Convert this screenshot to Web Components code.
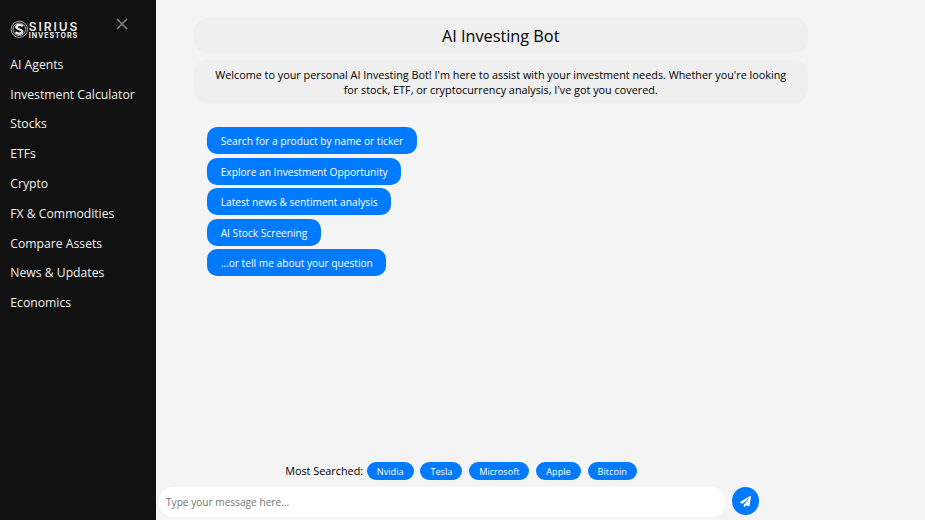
<!DOCTYPE html>
<html lang="en">
<head>
<meta charset="utf-8">
<title>AI Investing Bot</title>
<style>
    html, body {
        margin: 0;
        height: 100%;
        overflow: hidden;
    }

    body {
        background: #f4f4f4;
        color: #000;
        font-family: "Open Sans", "Noto Sans", sans-serif;
    }
</style>
</head>
<body>
<invest-app>
    <side-nav slot="nav">
        <nav-link>AI Agents</nav-link>
        <nav-link>Investment Calculator</nav-link>
        <nav-link>Stocks</nav-link>
        <nav-link>ETFs</nav-link>
        <nav-link>Crypto</nav-link>
        <nav-link>FX &amp; Commodities</nav-link>
        <nav-link>Compare Assets</nav-link>
        <nav-link>News &amp; Updates</nav-link>
        <nav-link>Economics</nav-link>
    </side-nav>

    <info-card style="--size: 16.25px; --line: 22px; --pad: 7px 20px 6.5px">AI Investing Bot</info-card>
    <info-card style="--size: 10.83px; --line: 15px; --pad: 6.5px 13.5px">Welcome to your personal AI Investing Bot! I'm here to assist with your investment needs. Whether you're looking for stock, ETF, or cryptocurrency analysis, I've got you covered.</info-card>

    <chat-options>
        <chat-option>Search for a product by name or ticker</chat-option>
        <chat-option>Explore an Investment Opportunity</chat-option>
        <chat-option>Latest news &amp; sentiment analysis</chat-option>
        <chat-option>AI Stock Screening</chat-option>
        <chat-option>...or tell me about your question</chat-option>
    </chat-options>

    <most-searched slot="footer">
        <search-tag>Nvidia</search-tag>
        <search-tag>Tesla</search-tag>
        <search-tag>Microsoft</search-tag>
        <search-tag>Apple</search-tag>
        <search-tag>Bitcoin</search-tag>
    </most-searched>
    <message-bar slot="footer"></message-bar>
</invest-app>

<script>
// Attach an open shadow root and fill it
function render(element, html) {
    element.attachShadow({ mode: 'open' }).innerHTML = html;
}

// Page shell: sidebar on the left, chat column on the right
class InvestApp extends HTMLElement {
    constructor() {
        super();
        render(this, `
            <style>
                :host {
                    display: flex;
                    height: 100vh;
                }

                main {
                    flex: 1;
                    display: flex;
                    flex-direction: column;
                    min-width: 0;
                }

                .column {
                    flex: 1;
                    display: flex;
                    flex-direction: column;
                    gap: 7px;
                    width: 614px;
                    padding: 17.5px 0 0 38px;
                }
            </style>
            <slot name="nav"></slot>
            <main>
                <div class="column"><slot></slot></div>
                <slot name="footer"></slot>
            </main>
        `);
    }
}

// Logo of the site: round S mark and two lines of lettering
class SiriusLogo extends HTMLElement {
    constructor() {
        super();
        render(this, `
            <style>
                :host {
                    display: block;
                    width: 68px;
                    height: 19px;
                }

                svg {
                    display: block;
                }
            </style>
            <svg width="68" height="19" viewBox="0 0 68 19" fill="#eee" font-family="Inter, sans-serif">
                <circle cx="9.3" cy="9.3" r="8.2" fill="none" stroke="#ccc" stroke-width=".8"/>
                <circle cx="9.3" cy="9.3" r="6.3" fill="none" stroke="#ccc" stroke-width=".8"/>
                <path d="M12.8 6.4C11.3 4.4 6.3 4.4 6.3 7.1C6.3 9.6 12.4 8.9 12.4 11.6C12.4 14.2 7.3 14.2 5.8 12.1" fill="none" stroke="#eee" stroke-width="2.3"/>
                <text x="18.8" y="10.6" font-size="12" font-weight="600" textLength="48.5">SIRIUS</text>
                <text x="18.8" y="17.6" font-size="7.2" font-weight="700" textLength="48.5">INVESTORS</text>
            </svg>
        `);
    }
}

class SideNav extends HTMLElement {
    constructor() {
        super();
        render(this, `
            <style>
                :host {
                    display: block;
                    flex: none;
                    width: 155.7px;
                    background: #111;
                }

                header {
                    display: flex;
                    align-items: flex-start;
                    justify-content: space-between;
                    height: 28.7px;
                    padding: 18px 28px 0 10px;
                }

                .logo {
                    padding-top: 2px;
                }

                .close {
                    display: block;
                }

                nav {
                    display: flex;
                    flex-direction: column;
                    padding-top: 3.2px;
                }
            </style>
            <header>
                <sirius-logo class="logo"></sirius-logo>
                <svg class="close" width="12" height="12" viewBox="0 0 12 12" stroke="#818181" stroke-width="1.6">
                    <path d="M1 1L11 11M11 1L1 11"/>
                </svg>
            </header>
            <nav><slot></slot></nav>
        `);
    }
}

class NavLink extends HTMLElement {
    constructor() {
        super();
        render(this, `
            <style>
                :host {
                    display: block;
                    padding-left: 10.3px;
                    font-size: 12.2px;
                    line-height: 29.8px;
                    color: #f1f1f1;
                    white-space: nowrap;
                }
            </style>
            <slot></slot>
        `);
    }
}

class InfoCard extends HTMLElement {
    constructor() {
        super();
        render(this, `
            <style>
                :host {
                    display: block;
                    padding: var(--pad);
                    border-radius: 13.5px;
                    background: #efefef;
                    font-size: var(--size);
                    line-height: var(--line);
                    text-align: center;
                }
            </style>
            <slot></slot>
        `);
    }
}

class ChatOptions extends HTMLElement {
    constructor() {
        super();
        render(this, `
            <style>
                :host {
                    display: flex;
                    flex-direction: column;
                    align-items: flex-start;
                    gap: 3.5px;
                    padding: 17px 13.5px;
                }
            </style>
            <slot></slot>
        `);
    }
}

class ChatOption extends HTMLElement {
    constructor() {
        super();
        render(this, `
            <style>
                :host {
                    display: block;
                    padding: 1px 13.5px 0;
                    border-radius: 10px;
                    background: #007bff;
                    color: #fff;
                    font-size: 10.18px;
                    line-height: 26px;
                    white-space: nowrap;
                }
            </style>
            <slot></slot>
        `);
    }
}

class MostSearched extends HTMLElement {
    constructor() {
        super();
        render(this, `
            <style>
                :host {
                    display: flex;
                    align-items: center;
                    gap: 6.9px;
                    padding: 0 0 7.5px 129.5px;
                }

                span {
                    margin-right: -3.2px;
                    padding-top: 1px;
                    font-size: 10.83px;
                    line-height: 16.5px;
                    white-space: nowrap;
                }
            </style>
            <span>Most Searched:</span>
            <slot></slot>
        `);
    }
}

class SearchTag extends HTMLElement {
    constructor() {
        super();
        render(this, `
            <style>
                :host {
                    display: block;
                    padding: 3px 10px 0;
                    border-radius: 9px;
                    background: #007bff;
                    color: #fff;
                    font-size: 9.15px;
                    line-height: 14.5px;
                }
            </style>
            <slot></slot>
        `);
    }
}

// Text field with the round send button
class MessageBar extends HTMLElement {
    constructor() {
        super();
        render(this, `
            <style>
                :host {
                    display: flex;
                    align-items: flex-start;
                    gap: 6.7px;
                    padding: 0 0 3.5px 3.3px;
                }

                input {
                    box-sizing: border-box;
                    width: 566px;
                    height: 29.5px;
                    padding: 0 7px;
                    border: 0;
                    border-radius: 14px;
                    background: #fff;
                    font: 10.15px "Open Sans", "Noto Sans", sans-serif;
                }

                input::placeholder {
                    color: #757575;
                }

                button {
                    display: flex;
                    align-items: center;
                    justify-content: center;
                    width: 27.5px;
                    height: 27.5px;
                    margin-top: .4px;
                    padding: 0;
                    border: 0;
                    border-radius: 50%;
                    background: #007bff;
                }
            </style>
            <input type="text" placeholder="Type your message here...">
            <button aria-label="Send">
                <svg width="11" height="11" viewBox="0 0 512 512" fill="#fff">
                    <path d="M476 3.2L12.5 270.6c-18.1 10.4-15.8 35.6 2.2 43.2L121 358.4l287.3-253.2c5.5-4.9 13.3 2.6 8.6 8.3L176 407v80.5c0 23.6 28.5 32.9 42.5 15.8L282 426l124.6 52.2c14.2 6 30.4-2.9 33-18.2l72-432C515 7.8 493.3-6.8 476 3.2z"/>
                </svg>
            </button>
        `);
    }
}

customElements.define('invest-app', InvestApp);
customElements.define('sirius-logo', SiriusLogo);
customElements.define('side-nav', SideNav);
customElements.define('nav-link', NavLink);
customElements.define('info-card', InfoCard);
customElements.define('chat-options', ChatOptions);
customElements.define('chat-option', ChatOption);
customElements.define('most-searched', MostSearched);
customElements.define('search-tag', SearchTag);
customElements.define('message-bar', MessageBar);
</script>
</body>
</html>
